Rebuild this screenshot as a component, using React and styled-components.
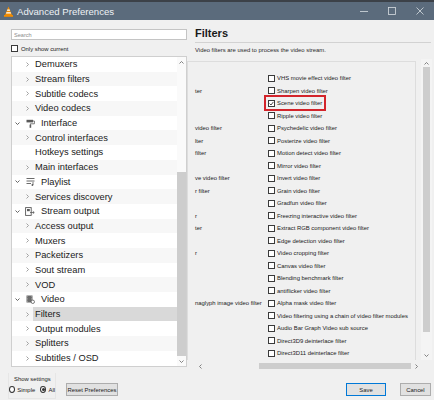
import React from 'react'
import styled, { createGlobalStyle } from 'styled-components'

const GlobalStyle = createGlobalStyle`
    html, body {
        margin: 0;
        padding: 0;
        background: #f0f0f0;
    }
    * {
        box-sizing: border-box;
    }
`;

const Window = styled.div`
    width: 434px;
    height: 400px;
    display: flex;
    flex-direction: column;
    background: #f0f0f0;
    font-family: "Liberation Sans", Arial, sans-serif;
    color: #1b1b1b;
    overflow: hidden;
`;

const TitleBar = styled.div`
    height: 20px;
    flex: none;
    display: flex;
    align-items: center;
    background: #5b6b7c;
    border-top: 2px solid #3c4148;
    padding-left: 4px;
    color: #eef1f4;
`;

const TitleText = styled.span`
    font-size: 9.6px;
    margin-left: 4px;
`;

const WinControls = styled.div`
    margin-left: auto;
    display: flex;
`;

const WinButton = styled.span`
    width: 28px;
    height: 18px;
    display: flex;
    justify-content: center;
    align-items: center;
`;

const Main = styled.div`
    flex: 1;
    min-height: 0;
    display: grid;
    grid-template-columns: 176px 1fr;
    padding: 0 3px 0 11px;
`;

const LeftColumn = styled.div`
    display: flex;
    flex-direction: column;
    padding-top: 9px;
`;

const SearchBox = styled.input`
    height: 11px;
    border: 1px solid #c4c4c4;
    background: #fff;
    font-family: "Liberation Sans", Arial, sans-serif;
    font-size: 5.6px;
    padding: 0 2px;
    color: #333;
    outline: none;

    &::placeholder {
        color: #8c8c8c;
    }
`;

const CheckRow = styled.label`
    margin-top: 4px;
    height: 9px;
    display: flex;
    align-items: center;
    gap: 3px;
    font-size: 5.9px;
    color: #222;
`;

const Box = styled.span`
    width: 7px;
    height: 7px;
    flex: none;
    border: 1px solid #3a3a3a;
    background: #fff;
    display: flex;
    align-items: center;
    justify-content: center;
`;

const Tree = styled.div`
    margin-top: 3px;
    height: 311px;
    border: 1px solid #cfcfcf;
    background: #fff;
    display: grid;
    grid-template-columns: 1fr 9px;
`;

const TreeRows = styled.div`
    display: flex;
    flex-direction: column;
`;

const TreeRow = styled.div`
    height: 14.7px;
    display: flex;
    align-items: center;
    background: ${p => (p.$alt ? '#f7f7f7' : '#fff')};
    font-size: 9.3px;
    color: #1a1a1a;
    white-space: nowrap;
`;

const Expander = styled.span`
    width: ${p => (p.$level === 0 ? 12 : 21)}px;
    padding-left: ${p => (p.$level === 0 ? 3 : 14)}px;
    height: 100%;
    display: flex;
    align-items: center;
    flex: none;
`;

const TreeIcon = styled.span`
    width: 12px;
    display: flex;
    justify-content: center;
    flex: none;
`;

const TreeLabel = styled.span`
    flex: 1;
    height: 100%;
    display: flex;
    align-items: center;
    padding-left: ${p => (p.$category ? 5 : 2)}px;
    background: ${p => (p.$selected ? '#d9d9d9' : 'transparent')};
`;

const VScroll = styled.div`
    display: flex;
    flex-direction: column;
    background: ${p => p.$track || '#f4f4f4'};
`;

const Arrow = styled.span`
    height: ${p => p.$size || 10}px;
    flex: none;
    display: flex;
    align-items: center;
    justify-content: center;
`;

const VTrack = styled.div`
    flex: 1;
    display: flex;
    flex-direction: column;
    padding: 0 ${p => p.$inset || 0}px;
`;

const VThumb = styled.div`
    margin-top: ${p => p.$offset}px;
    height: ${p => p.$size}px;
    background: #cdcdcd;
`;

const RightColumn = styled.div`
    display: flex;
    flex-direction: column;
    padding-top: 6px;
    min-height: 0;
`;

const Heading = styled.h2`
    margin: 0 1px 0 8px;
    font-size: 11px;
    font-weight: 700;
    line-height: 14px;
    padding-bottom: 2px;
    border-bottom: 1px solid #d2d2d2;
    color: #1a1a1a;
`;

const Description = styled.p`
    margin: 3px 0 0 8px;
    font-size: 5.9px;
    line-height: 8px;
    color: #2a2a2a;
`;

const ScrollArea = styled.div`
    margin: 5px 0 1px 0;
    flex: 1;
    min-height: 0;
    display: grid;
    grid-template-columns: 1fr 11px;
    grid-template-rows: 1fr 12px;
`;

const Viewport = styled.div`
    overflow: hidden;
    padding: 2px 5px 0 0;
`;

const FilterFrame = styled.div`
    height: 100%;
    border: 1px solid #dddddd;
    border-bottom: none;
    padding-top: 10px;
`;

const FilterRow = styled.div`
    height: 12.5px;
    display: flex;
    align-items: center;
    font-size: 5.9px;
    color: #222;
    white-space: nowrap;
`;

const LabelCell = styled.span`
    width: 80px;
    flex: none;
    padding-left: 7px;
    overflow: hidden;
`;

const CheckCell = styled.span`
    position: relative;
    display: inline-flex;
    align-items: center;
    gap: 2px;

    ${p => p.$highlight && `
        &::after {
            content: '';
            position: absolute;
            top: -5px;
            bottom: -4px;
            left: -4px;
            right: -4px;
            border: 2px solid #d3242b;
        }
    `}
`;

const HScroll = styled.div`
    display: flex;
    align-items: center;
    padding-left: 8px;
`;

const HArrow = styled.span`
    width: 10px;
    flex: none;
    display: flex;
    justify-content: center;
`;

const HTrack = styled.div`
    flex: 1;
    height: 6px;
    display: flex;
`;

const HThumb = styled.div`
    margin-left: ${p => p.$offset}px;
    width: ${p => p.$size}px;
    background: #cdcdcd;
`;

const Footer = styled.div`
    height: 27px;
    flex: none;
    display: flex;
    align-items: flex-start;
    padding: 0 3px 0 8px;
`;

const ShowGroup = styled.div`
    width: 48px;
    height: 26px;
    display: flex;
    flex-direction: column;
    padding-top: 2px;
    border: 1px solid #e6e6e6;
    border-top: none;
    font-size: 5.9px;
    color: #222;
`;

const Legend = styled.span`
    margin-left: 5px;
    line-height: 8px;
`;

const RadioRow = styled.div`
    margin-top: 3px;
    display: flex;
    align-items: center;
`;

const Radio = styled.span`
    width: 7px;
    height: 7px;
    border-radius: 50%;
    border: 1px solid #333;
    background: #fff;
    display: flex;
    align-items: center;
    justify-content: center;
    margin-right: 2px;
    margin-left: ${p => p.$gap || 0}px;

    &::after {
        content: '';
        width: 3px;
        height: 3px;
        border-radius: 50%;
        background: ${p => (p.$checked ? '#333' : 'transparent')};
    }
`;

const Button = styled.div`
    margin-top: 10px;
    margin-left: ${p => p.$gap || 0}px;
    height: 13px;
    width: ${p => p.$width}px;
    display: flex;
    align-items: center;
    justify-content: center;
    background: #e1e1e1;
    border: 1px solid ${p => (p.$default ? '#0078d7' : '#adadad')};
    font-size: 5.9px;
    color: #1a1a1a;
    white-space: nowrap;
`;

const Spacer = styled.div`
    flex: 1;
`;

const tree = [
    { label: 'Demuxers', level: 1 },
    { label: 'Stream filters', level: 1 },
    { label: 'Subtitle codecs', level: 1 },
    { label: 'Video codecs', level: 1 },
    { label: 'Interface', level: 0, icon: 'interface' },
    { label: 'Control interfaces', level: 1 },
    { label: 'Hotkeys settings', level: 1, leaf: true },
    { label: 'Main interfaces', level: 1 },
    { label: 'Playlist', level: 0, icon: 'playlist' },
    { label: 'Services discovery', level: 1 },
    { label: 'Stream output', level: 0, icon: 'stream' },
    { label: 'Access output', level: 1 },
    { label: 'Muxers', level: 1 },
    { label: 'Packetizers', level: 1 },
    { label: 'Sout stream', level: 1 },
    { label: 'VOD', level: 1 },
    { label: 'Video', level: 0, icon: 'video' },
    { label: 'Filters', level: 1, selected: true },
    { label: 'Output modules', level: 1 },
    { label: 'Splitters', level: 1 },
    { label: 'Subtitles / OSD', level: 1 },
];

// left column is scrolled off to the left, only the tail of each name shows
const filters = [
    ['', 'VHS movie effect video filter'],
    ['ter', 'Sharpen video filter'],
    ['', 'Scene video filter', true],
    ['', 'Ripple video filter'],
    ['video filter', 'Psychedelic video filter'],
    ['lter', 'Posterize video filter'],
    ['filter', 'Motion detect video filter'],
    ['', 'Mirror video filter'],
    ['ve video filter', 'Invert video filter'],
    ['r filter', 'Grain video filter'],
    ['', 'Gradfun video filter'],
    ['r', 'Freezing interactive video filter'],
    ['ter', 'Extract RGB component video filter'],
    ['', 'Edge detection video filter'],
    ['r', 'Video cropping filter'],
    ['', 'Canvas video filter'],
    ['', 'Blending benchmark filter'],
    ['', 'antiflicker video filter'],
    ['naglyph image video filter', 'Alpha mask video filter'],
    ['', 'Video filtering using a chain of video filter modules'],
    ['', 'Audio Bar Graph Video sub source'],
    ['', 'Direct3D9 deinterlace filter'],
    ['', 'Direct3D11 deinterlace filter'],
];

const Cone = () => (
    <svg width="9" height="11" viewBox="0 0 9 11">
        <path d="M4.5 0.5 L8 9 H1 Z" fill="#f28c00" />
        <path d="M3.4 3.4 H5.6 L6.1 4.8 H2.9 Z M2.4 6.2 H6.6 L7.1 7.6 H1.9 Z" fill="#fff" />
        <rect x="0" y="9" width="9" height="1.8" fill="#f28c00" />
    </svg>
);

const ChevronRight = () => (
    <svg width="3" height="5" viewBox="0 0 3 5">
        <path d="M0.5 0.5 L2.5 2.5 L0.5 4.5" fill="none" stroke="#8a8a8a" strokeWidth="0.8" />
    </svg>
);

const ChevronDown = () => (
    <svg width="5" height="3" viewBox="0 0 5 3">
        <path d="M0.5 0.5 L2.5 2.5 L4.5 0.5" fill="none" stroke="#555" strokeWidth="0.9" />
    </svg>
);

const CategoryIcon = ({ kind }) => {
    if (kind === 'interface') {
        return (
            <svg width="9" height="9" viewBox="0 0 9 9">
                <rect x="0.5" y="0.8" width="6.5" height="2.6" fill="#5a5a5a" />
                <path d="M7 2 H8.4 V4.8 H4.4 V6" fill="none" stroke="#5a5a5a" strokeWidth="0.8" />
                <rect x="3.6" y="5.8" width="1.6" height="3" fill="#5a5a5a" />
            </svg>
        );
    }
    if (kind === 'playlist') {
        return (
            <svg width="9" height="9" viewBox="0 0 9 9">
                <path d="M0.5 1.5 H8.5 M0.5 4 H8.5 M0.5 6.5 H5" stroke="#5a5a5a" strokeWidth="0.9" />
                <path d="M7 5 V8" stroke="#5a5a5a" strokeWidth="0.8" />
                <circle cx="6.4" cy="8" r="0.9" fill="#5a5a5a" />
            </svg>
        );
    }
    if (kind === 'stream') {
        return (
            <svg width="10" height="9" viewBox="0 0 10 9">
                <rect x="0.6" y="0.6" width="5.6" height="7.8" fill="none" stroke="#5a5a5a" strokeWidth="0.9" />
                <rect x="2" y="2" width="2.8" height="2.2" fill="#5a5a5a" />
                <path d="M5 5.5 H9.2 M7.8 4.2 L9.2 5.5 L7.8 6.8" fill="none" stroke="#5a5a5a" strokeWidth="0.8" />
            </svg>
        );
    }
    return (
        <svg width="9" height="9" viewBox="0 0 9 9">
            <rect x="0.5" y="0.5" width="6" height="7" fill="#6a6a6a" />
            <path d="M1.3 1.3 V7 M5.7 1.3 V7" stroke="#d8d8d8" strokeWidth="0.6" strokeDasharray="0.8 0.8" />
            <circle cx="6.8" cy="6.8" r="1.7" fill="#fff" stroke="#5a5a5a" strokeWidth="0.8" />
        </svg>
    );
};

const Check = () => (
    <svg width="5" height="5" viewBox="0 0 5 5">
        <path d="M0.6 2.6 L2 4 L4.4 0.9" fill="none" stroke="#222" strokeWidth="0.8" />
    </svg>
);

const ArrowUp = () => (
    <svg width="5" height="3" viewBox="0 0 5 3">
        <path d="M0.5 2.5 L2.5 0.5 L4.5 2.5" fill="none" stroke="#666" strokeWidth="0.8" />
    </svg>
);

const ArrowDown = () => (
    <svg width="5" height="3" viewBox="0 0 5 3">
        <path d="M0.5 0.5 L2.5 2.5 L4.5 0.5" fill="none" stroke="#666" strokeWidth="0.8" />
    </svg>
);

const ArrowLeft = () => (
    <svg width="3" height="5" viewBox="0 0 3 5">
        <path d="M2.5 0.5 L0.5 2.5 L2.5 4.5" fill="none" stroke="#666" strokeWidth="0.8" />
    </svg>
);

const ArrowRight = () => (
    <svg width="3" height="5" viewBox="0 0 3 5">
        <path d="M0.5 0.5 L2.5 2.5 L0.5 4.5" fill="none" stroke="#666" strokeWidth="0.8" />
    </svg>
);

function TreeItem({ item, index }) {
    const category = item.level === 0;
    return (
        <TreeRow $alt={index % 2 === 1}>
            <Expander $level={item.level}>
                {category ? <ChevronDown /> : !item.leaf && <ChevronRight />}
            </Expander>
            {category && (
                <TreeIcon>
                    <CategoryIcon kind={item.icon} />
                </TreeIcon>
            )}
            <TreeLabel $category={category} $selected={item.selected}>
                {item.label}
            </TreeLabel>
        </TreeRow>
    );
}

export default function App() {
    return (
        <Window>
            <GlobalStyle />
            <TitleBar>
                <Cone />
                <TitleText>Advanced Preferences</TitleText>
                <WinControls>
                    <WinButton>
                        <svg width="8" height="8" viewBox="0 0 8 8">
                            <path d="M0 4.5 H8" stroke="#d7dde2" strokeWidth="0.8" />
                        </svg>
                    </WinButton>
                    <WinButton>
                        <svg width="8" height="8" viewBox="0 0 8 8">
                            <rect x="0.5" y="0.5" width="7" height="7" fill="none" stroke="#d7dde2" strokeWidth="0.8" />
                        </svg>
                    </WinButton>
                    <WinButton>
                        <svg width="8" height="8" viewBox="0 0 8 8">
                            <path d="M0.5 0.5 L7.5 7.5 M7.5 0.5 L0.5 7.5" stroke="#d7dde2" strokeWidth="0.8" />
                        </svg>
                    </WinButton>
                </WinControls>
            </TitleBar>

            <Main>
                <LeftColumn>
                    <SearchBox placeholder="Search" />
                    <CheckRow>
                        <Box />
                        Only show current
                    </CheckRow>
                    <Tree>
                        <TreeRows>
                            {tree.map((item, i) => (
                                <TreeItem key={item.label} item={item} index={i} />
                            ))}
                        </TreeRows>
                        <VScroll $track="#fafafa">
                            <Arrow><ArrowUp /></Arrow>
                            <VTrack>
                                <VThumb $offset={105} $size={184} />
                            </VTrack>
                            <Arrow><ArrowDown /></Arrow>
                        </VScroll>
                    </Tree>
                </LeftColumn>

                <RightColumn>
                    <Heading>Filters</Heading>
                    <Description>Video filters are used to process the video stream.</Description>
                    <ScrollArea>
                        <Viewport>
                            <FilterFrame>
                                {filters.map(([tail, name, on]) => (
                                    <FilterRow key={name}>
                                        <LabelCell>{tail}</LabelCell>
                                        <CheckCell $highlight={on}>
                                            <Box>{on && <Check />}</Box>
                                            {name}
                                        </CheckCell>
                                    </FilterRow>
                                ))}
                            </FilterFrame>
                        </Viewport>
                        <VScroll>
                            <Arrow $size={8}><ArrowUp /></Arrow>
                            <VTrack $inset={2}>
                                <VThumb $offset={0} $size={265} />
                            </VTrack>
                            <Arrow><ArrowDown /></Arrow>
                        </VScroll>
                        <HScroll>
                            <HArrow><ArrowLeft /></HArrow>
                            <HTrack>
                                <HThumb $offset={54} $size={152} />
                            </HTrack>
                            <HArrow><ArrowRight /></HArrow>
                        </HScroll>
                    </ScrollArea>
                </RightColumn>
            </Main>

            <Footer>
                <ShowGroup>
                    <Legend>Show settings</Legend>
                    <RadioRow>
                        <Radio />
                        Simple
                        <Radio $checked $gap={5} />
                        All
                    </RadioRow>
                </ShowGroup>
                <Button $width={52} $gap={10}>Reset Preferences</Button>
                <Spacer />
                <Button $width={40} $default>Save</Button>
                <Button $width={31} $gap={14}>Cancel</Button>
            </Footer>
        </Window>
    );
}
